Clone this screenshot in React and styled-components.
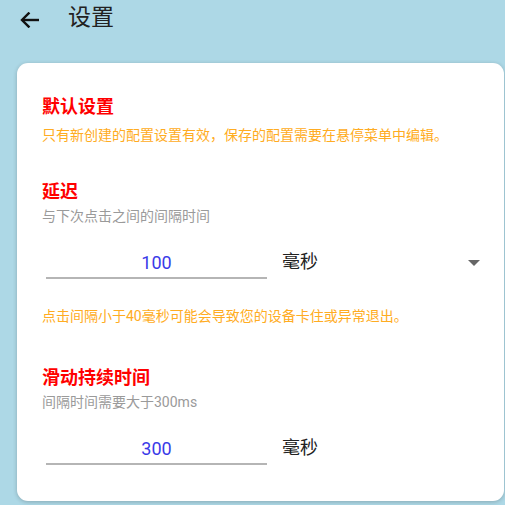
import React from "react";
import styled, { createGlobalStyle } from "styled-components";

const Global = createGlobalStyle`
  html, body { margin: 0; padding: 0; }
  body {
    background: #add8e6;
    font-family: Roboto, "Noto Sans CJK SC", sans-serif;
  }
`;

const Page = styled.div`
  width: 505px;
  height: 505px;
  background: #add8e6;
  overflow: hidden;
  box-sizing: border-box;
`;

const Header = styled.header`
  height: 36px;
  display: flex;
  align-items: center;
  padding-left: 20px;
`;

const BackButton = styled.button`
  border: 0;
  background: none;
  padding: 0;
  width: 20px;
  height: 16px;
  display: flex;
  margin-top: 3px;
  color: #111;
`;

const Title = styled.h1`
  margin: 0 0 0 28px;
  font-size: 23px;
  line-height: 30px;
  font-weight: 400;
  color: #222;
`;

const Card = styled.section`
  margin: 27px 1px 0 17px;
  background: #fff;
  border-radius: 11px;
  box-shadow: 0 1px 4px rgba(0, 0, 0, 0.22);
  padding: 32px 24px 36px 25px;
`;

const Section = styled.div`
  margin-top: ${(p) => p.$top || 0}px;
`;

const SectionTitle = styled.h2`
  margin: 0;
  font-size: 18px;
  line-height: 24px;
  font-weight: 700;
  color: #ff0000;
`;

const Note = styled.p`
  margin: ${(p) => p.$top || 0}px 0 0;
  font-size: 14px;
  line-height: 20px;
  color: ${(p) => (p.$warn ? "#ffac22" : "#9a9a9a")};
  white-space: nowrap;
`;

const InputRow = styled.div`
  display: flex;
  align-items: flex-start;
  margin-top: 24px;
`;

const NumberField = styled.input`
  width: 221px;
  margin-left: 4px;
  box-sizing: border-box;
  border: 0;
  border-bottom: 2px solid #b5b5b5;
  padding: 0 0 3px;
  height: 29px;
  font-family: Roboto, sans-serif;
  font-size: 18px;
  line-height: 24px;
  color: #3a3ae8;
  text-align: center;
  background: transparent;
  outline: none;
`;

const Unit = styled.div`
  flex: ${(p) => (p.$select ? 1 : "none")};
  display: flex;
  align-items: center;
  justify-content: space-between;
  margin-left: 15px;
  font-size: 18px;
  line-height: 24px;
  color: #222;
  margin-top: 0;
`;

const Caret = styled.span`
  width: 0;
  height: 0;
  border-left: 6.5px solid transparent;
  border-right: 6.5px solid transparent;
  border-top: 6px solid #666;
  margin-top: 1px;
`;

function BackArrow() {
  return (
    <svg width="20" height="16" viewBox="0 0 20 16" fill="none">
      <path d="M2 8H19" stroke="currentColor" strokeWidth="2.4" />
      <path
        d="M8.6 1.4L2 8L8.6 14.6"
        stroke="currentColor"
        strokeWidth="2.4"
        strokeLinecap="square"
      />
    </svg>
  );
}

export default function App() {
  return (
    <Page>
      <Global />
      <Header>
        <BackButton aria-label="返回">
          <BackArrow />
        </BackButton>
        <Title>设置</Title>
      </Header>
      <Card>
        <Section>
          <SectionTitle>默认设置</SectionTitle>
          <Note $warn $top={6}>
            只有新创建的配置设置有效，保存的配置需要在悬停菜单中编辑。
          </Note>
        </Section>
        <Section $top={35}>
          <SectionTitle>延迟</SectionTitle>
          <Note $top={2}>与下次点击之间的间隔时间</Note>
          <InputRow>
            <NumberField defaultValue="100" />
            <Unit $select>
              <span>毫秒</span>
              <Caret />
            </Unit>
          </InputRow>
          <Note $warn $top={27}>
            点击间隔小于40毫秒可能会导致您的设备卡住或异常退出。
          </Note>
        </Section>
        <Section $top={40}>
          <SectionTitle>滑动持续时间</SectionTitle>
          <Note $top={2}>间隔时间需要大于300ms</Note>
          <InputRow>
            <NumberField defaultValue="300" />
            <Unit>毫秒</Unit>
          </InputRow>
        </Section>
      </Card>
    </Page>
  );
}
